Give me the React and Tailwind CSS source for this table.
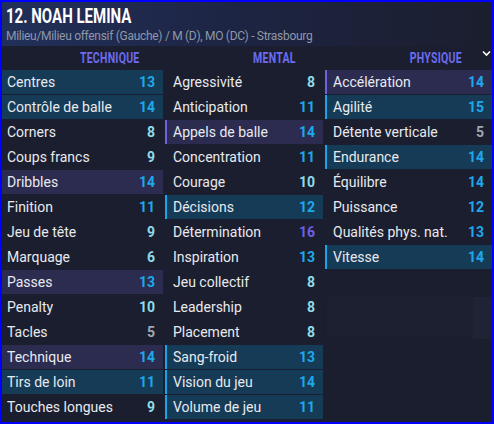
import React from 'react';

const technique = [
  ['Centres', 13, 'teal'],
  ['Contrôle de balle', 14, 'teal'],
  ['Corners', 8],
  ['Coups francs', 9],
  ['Dribbles', 14, 'purple'],
  ['Finition', 11],
  ['Jeu de tête', 9],
  ['Marquage', 6],
  ['Passes', 13, 'purple'],
  ['Penalty', 10],
  ['Tacles', 5],
  ['Technique', 14, 'purple'],
  ['Tirs de loin', 11, 'teal'],
  ['Touches longues', 9],
];

const mental = [
  ['Agressivité', 8],
  ['Anticipation', 11],
  ['Appels de balle', 14, 'purple'],
  ['Concentration', 11],
  ['Courage', 10],
  ['Décisions', 12, 'teal'],
  ['Détermination', 16],
  ['Inspiration', 13],
  ['Jeu collectif', 8],
  ['Leadership', 8],
  ['Placement', 8],
  ['Sang-froid', 13, 'teal'],
  ['Vision du jeu', 14, 'teal'],
  ['Volume de jeu', 11, 'teal'],
];

const physique = [
  ['Accélération', 14, 'purple'],
  ['Agilité', 15, 'teal'],
  ['Détente verticale', 5],
  ['Endurance', 14, 'teal'],
  ['Équilibre', 14],
  ['Puissance', 12],
  ['Qualités phys. nat.', 13],
  ['Vitesse', 14, 'teal'],
];

const valueColor = (v) => {
  if (v >= 16) return 'text-[#6d5fe6]';
  if (v >= 11) return 'text-[#1ea8ec]';
  if (v >= 6) return 'text-[#8edcea]';
  return 'text-[#a3a7b0]';
};

const rowBg = {
  teal: 'bg-[#163b56]',
  purple: 'bg-[#2c2c50]',
};

const barBg = {
  teal: 'bg-[#1aa3ea]',
  purple: 'bg-[#6e62e2]',
};

const AttrRow = ({ label, value, hl, first }) => (
  <div className={`flex h-[24px] items-center ${hl ? rowBg[hl] : ''}`}>
    {!first && <div className={`h-full w-[2px] ${hl ? barBg[hl] : ''}`} />}
    <span className={`flex-1 text-[14px] text-[#e8eaef] ${first ? 'pl-[5px]' : 'pl-[6px]'}`}>{label}</span>
    <span className={`font-bold text-[14px] pr-[8px] ${valueColor(value)}`}>{value}</span>
  </div>
);

const Column = ({ items, first, className }) => (
  <div className={`flex flex-col gap-px ${className}`}>
    {items.map(([label, value, hl]) => (
      <AttrRow key={label} label={label} value={value} hl={hl} first={first} />
    ))}
  </div>
);

const ColHeader = ({ children, className }) => (
  <div className={`flex justify-center ${className}`}>
    <span className="inline-block scale-x-75 font-bold text-[14px] text-[#6c6cf0] tracking-wide">{children}</span>
  </div>
);

export default function App() {
  return (
    <div
      className="w-[494px] h-[424px] border-2 border-[#0000ff] bg-[#1b1e2e] overflow-hidden flex flex-col"
      style={{ fontFamily: 'Roboto, "Liberation Sans", sans-serif' }}
    >
      {/* Header */}
      <div className="h-[44px] shrink-0 bg-gradient-to-r from-[#21305a] via-[#1d2442] to-[#1b1e2e] pl-[4px] pt-[3px]">
        <div className="h-[22px] flex items-center">
          <span className="inline-block origin-left scale-x-75 font-bold text-[20px] text-white leading-none">12. NOAH LEMINA</span>
        </div>
        <div className="text-[12px] leading-[16px] text-[#8f97a9] mt-[1px] tracking-[-0.3px]">
          Milieu/Milieu offensif (Gauche) / M (D), MO (DC) - Strasbourg
        </div>
      </div>

      {/* Column headers */}
      <div className="relative h-[24px] shrink-0 flex items-center">
        <ColHeader className="w-[161px] pl-[54px]">TECHNIQUE</ColHeader>
        <ColHeader className="w-[158px] ml-[2px] pl-[60px]">MENTAL</ColHeader>
        <ColHeader className="w-[167px] ml-[2px] pl-[54px]">PHYSIQUE</ColHeader>
        <svg className="absolute right-[1px] top-[4px]" width="9" height="7" viewBox="0 0 9 7">
          <path d="M1 1.5 L4.5 5 L8 1.5" stroke="#ffffff" strokeWidth="1.6" fill="none" />
        </svg>
      </div>

      {/* Attributes */}
      <div className="flex gap-[2px]">
        <Column items={technique} first className="w-[161px]" />
        <Column items={mental} className="w-[158px]" />
        <div className="w-[167px] flex flex-col">
          <Column items={physique} />
          <div className="flex mt-[28px]">
            <div className="ml-[2px] w-[146px] h-[40px] bg-[#1d2031]" />
            <div className="w-[19px] h-[42px] bg-[#1f2336]" />
          </div>
        </div>
      </div>
    </div>
  );
}
